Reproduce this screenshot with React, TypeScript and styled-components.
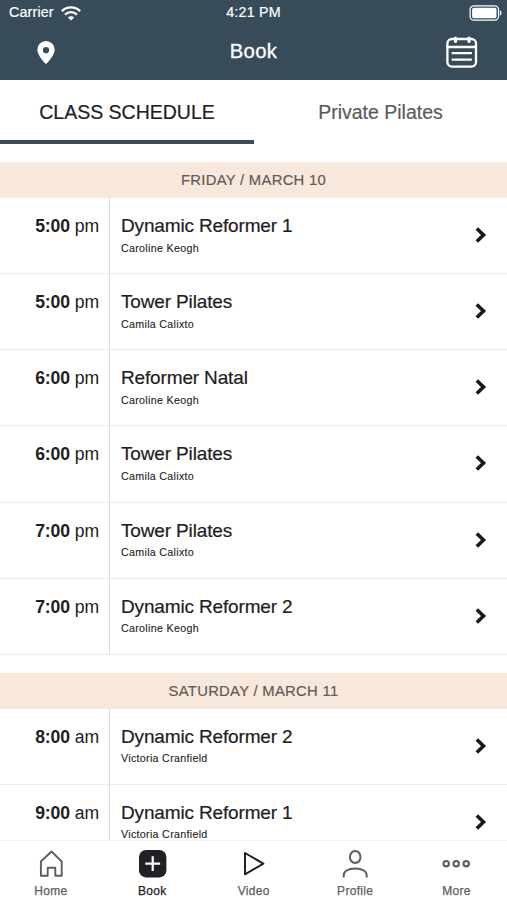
import React from 'react';
import styled, { createGlobalStyle } from 'styled-components';

const GlobalStyle = createGlobalStyle`
  * { box-sizing: border-box; }
  html, body { margin: 0; background: #fff; overflow: hidden; }
  body { font-family: "Liberation Sans", Arial, sans-serif; color: #1f2022; }
`;

const Screen = styled.div`
  width: 507px;
  height: 900px;
  display: flex;
  flex-direction: column;
  overflow: hidden;
  background: #fff;
`;

const Header = styled.header`
  flex: none;
  height: 80px;
  background: #384b59;
  color: #fff;
`;

const StatusBar = styled.div`
  height: 25px;
  display: grid;
  grid-template-columns: 1fr auto 1fr;
  align-items: center;
  padding: 0 5px 0 9px;
  font-size: 14.3px;
  line-height: 25px;
  -webkit-text-stroke: 0.2px #fff;
`;

const Carrier = styled.div`
  display: flex;
  align-items: center;
  gap: 7px;
  height: 25px;
  letter-spacing: 0.15px;
`;

const Clock = styled.span`
  letter-spacing: 0.2px;
  padding-right: 4px;
`;

const BatterySlot = styled.div`
  display: flex;
  justify-content: flex-end;
`;

const NavBar = styled.div`
  height: 55px;
  display: grid;
  grid-template-columns: 92px 1fr 92px;
  align-items: center;
`;

const NavAction = styled.div`
  display: flex;
  justify-content: center;
`;

const Title = styled.h1`
  margin: 0;
  padding-bottom: 2px;
  font-size: 20.3px;
  line-height: 53px;
  font-weight: 400;
  text-align: center;
  letter-spacing: 0.3px;
  -webkit-text-stroke: 0.3px #fff;
`;

const Tabs = styled.nav`
  flex: none;
  height: 82px;
  display: grid;
  grid-template-columns: 254px 1fr;
`;

const Tab = styled.div<{ $active?: boolean }>`
  height: 64px;
  line-height: 64px;
  text-align: center;
  font-size: 19.5px;
  -webkit-text-stroke: 0.2px currentColor;
  color: ${p => (p.$active ? '#202124' : '#5a5a5c')};
  border-bottom: 4px solid ${p => (p.$active ? '#384b59' : 'transparent')};
`;

const Schedule = styled.main`
  flex: 1;
  min-height: 0;
  overflow: hidden;
  display: flex;
  flex-direction: column;
  gap: 18px;
`;

const Day = styled.section`
  flex: none;
`;

const DayHeading = styled.h2`
  margin: 0;
  height: 36px;
  background: #f8e8dc;
  color: #625b57;
  text-align: center;
  font-weight: 400;
  font-size: 14.8px;
  line-height: 36px;
  letter-spacing: 0.3px;
  -webkit-text-stroke: 0.2px currentColor;
`;

const Row = styled.div`
  height: 76.15px;
  display: grid;
  grid-template-columns: 110px 1fr 54px;
  border-bottom: 1px solid #e9ecee;
`;

const Time = styled.div`
  border-right: 1px solid #dadde0;
  padding: 17px 10px 0 0;
  text-align: right;
  font-size: 17.6px;
  line-height: 22px;
  letter-spacing: -0.1px;
`;

const Details = styled.div`
  padding: 16px 0 0 11px;
`;

const ClassName = styled.div`
  font-size: 19px;
  line-height: 24px;
  letter-spacing: -0.15px;
  -webkit-text-stroke: 0.2px currentColor;
`;

const Teacher = styled.div`
  font-size: 10.7px;
  line-height: 14px;
  margin-top: 2.5px;
  letter-spacing: 0.3px;
  -webkit-text-stroke: 0.1px currentColor;
`;

const Arrow = styled.div`
  display: flex;
  align-items: center;
  justify-content: center;
  padding: 0 0 1px 1px;
`;

const TabBar = styled.footer`
  flex: none;
  height: 60px;
  display: grid;
  grid-template-columns: repeat(5, 1fr);
  border-top: 1px solid #f3f3f4;
  background: #fff;
`;

const TabItem = styled.div<{ $active?: boolean }>`
  display: flex;
  flex-direction: column;
  align-items: center;
  padding: 8px 0 0;
  color: ${p => (p.$active ? '#1f2022' : '#5c5e62')};
`;

const TabLabel = styled.span`
  font-size: 12px;
  line-height: 14px;
  margin-top: 5px;
  padding-left: 0.5px;
  letter-spacing: 0.3px;
  -webkit-text-stroke: 0.25px currentColor;
`;

const WifiIcon = () => (
  <svg width="20" height="16" viewBox="0 0 20 16" fill="none" stroke="#fff" strokeWidth="2.2">
    <path d="M.8 6.1a13.3 13.3 0 0 1 18.4 0" />
    <path d="M4 9.6a8.6 8.6 0 0 1 12 0" />
    <path d="M10 15.5 6.9 12.5a4.4 4.4 0 0 1 6.2 0Z" fill="#fff" stroke="none" />
  </svg>
);

const BatteryIcon = () => (
  <svg width="33" height="16" viewBox="0 0 33 16">
    <rect x="1.1" y=".8" width="28.4" height="14.4" rx="3.6" fill="none" stroke="#fff" strokeWidth="1.2" />
    <rect x="3.1" y="2.8" width="24.4" height="10.4" rx="1.8" fill="#fff" />
    <path d="M30.8 5.2q1.8.7 1.8 2.8t-1.8 2.8Z" fill="#fff" />
  </svg>
);

const PinIcon = () => (
  <svg width="18" height="23" viewBox="0 0 18 23">
    <path fill="#fff" fillRule="evenodd" d="M9 0a8.7 8.7 0 0 0-8.7 8.7C.3 14.8 9 23 9 23s8.7-8.2 8.7-14.3A8.7 8.7 0 0 0 9 0Zm0 6.1a3.1 3.1 0 1 1 0 6.2 3.1 3.1 0 0 1 0-6.2Z" />
  </svg>
);

const CalendarIcon = () => (
  <svg width="34" height="34" viewBox="-2 1 34 34" fill="none" stroke="#fff" strokeWidth="2.3" strokeLinecap="round">
    <rect x="1.4" y="4" width="28.6" height="27.6" rx="4.5" />
    <path d="M1.5 12h28.5M6.5 18.2h18.5M6.5 24.6h18.5" />
    <path d="M9.5 3v3.5M23 3v3.5" strokeWidth="3.2" />
  </svg>
);

const ChevronIcon = () => (
  <svg width="12" height="16" viewBox="0 0 12 16" fill="none" stroke="#17191b" strokeWidth="3.6">
    <path d="m1.8 1.5 6.7 6.5-6.7 6.5" />
  </svg>
);

const HomeIcon = () => (
  <svg width="30" height="30" viewBox="0 0 30 30" fill="none" stroke="currentColor" strokeWidth="1.9" strokeLinejoin="round">
    <path d="M4.9 12.5 15.5 2.5l10.2 10v14.3h-6.4v-8.1h-7.6v8.1H4.9Z" />
  </svg>
);

const BookIcon = () => (
  <svg width="30" height="30" viewBox="0 0 30 30">
    <rect x="2" y="1" width="27.4" height="27.4" rx="7" fill="#202124" />
    <path d="M15.7 7.3v14.8M8.3 14.7h14.8" stroke="#fff" strokeWidth="2.2" />
  </svg>
);

const VideoIcon = () => (
  <svg width="30" height="30" viewBox="0 0 30 30" fill="none" stroke="#202124" strokeWidth="2" strokeLinejoin="round">
    <path d="M7 4v21.3L25.4 14.7Z" />
  </svg>
);

const ProfileIcon = () => (
  <svg width="30" height="30" viewBox="0 0 30 30" fill="none" stroke="currentColor" strokeWidth="2">
    <ellipse cx="15.2" cy="8" rx="5.3" ry="6" />
    <path d="M3.7 28.5v-2.2c0-3.7 3.8-6.8 11.5-6.8s11.5 3.1 11.5 6.8v2.2" />
  </svg>
);

const MoreIcon = () => (
  <svg width="30" height="30" viewBox="0 0 30 30" fill="none" stroke="currentColor" strokeWidth="2.1">
    <circle cx="5.2" cy="14.7" r="2.7" />
    <circle cx="15.2" cy="14.7" r="2.7" />
    <circle cx="25.2" cy="14.7" r="2.7" />
  </svg>
);

const days = [
  {
    label: 'FRIDAY / MARCH 10',
    classes: [
      ['5:00', 'pm', 'Dynamic Reformer 1', 'Caroline Keogh'],
      ['5:00', 'pm', 'Tower Pilates', 'Camila Calixto'],
      ['6:00', 'pm', 'Reformer Natal', 'Caroline Keogh'],
      ['6:00', 'pm', 'Tower Pilates', 'Camila Calixto'],
      ['7:00', 'pm', 'Tower Pilates', 'Camila Calixto'],
      ['7:00', 'pm', 'Dynamic Reformer 2', 'Caroline Keogh'],
    ],
  },
  {
    label: 'SATURDAY / MARCH 11',
    classes: [
      ['8:00', 'am', 'Dynamic Reformer 2', 'Victoria Cranfield'],
      ['9:00', 'am', 'Dynamic Reformer 1', 'Victoria Cranfield'],
    ],
  },
];

const tabItems = [
  { label: 'Home', Icon: HomeIcon },
  { label: 'Book', Icon: BookIcon, active: true },
  { label: 'Video', Icon: VideoIcon },
  { label: 'Profile', Icon: ProfileIcon },
  { label: 'More', Icon: MoreIcon },
];

export default function App() {
  return (
    <Screen>
      <GlobalStyle />
      <Header>
        <StatusBar>
          <Carrier>Carrier <WifiIcon /></Carrier>
          <Clock>4:21 PM</Clock>
          <BatterySlot><BatteryIcon /></BatterySlot>
        </StatusBar>
        <NavBar>
          <NavAction><PinIcon /></NavAction>
          <Title>Book</Title>
          <NavAction><CalendarIcon /></NavAction>
        </NavBar>
      </Header>
      <Tabs>
        <Tab $active>CLASS SCHEDULE</Tab>
        <Tab>Private Pilates</Tab>
      </Tabs>
      <Schedule>
        {days.map(day => (
          <Day key={day.label}>
            <DayHeading>{day.label}</DayHeading>
            {day.classes.map(([time, half, name, teacher], i) => (
              <Row key={i}>
                <Time><b>{time}</b> {half}</Time>
                <Details>
                  <ClassName>{name}</ClassName>
                  <Teacher>{teacher}</Teacher>
                </Details>
                <Arrow><ChevronIcon /></Arrow>
              </Row>
            ))}
          </Day>
        ))}
      </Schedule>
      <TabBar>
        {tabItems.map(({ label, Icon, active }) => (
          <TabItem key={label} $active={active}>
            <Icon />
            <TabLabel>{label}</TabLabel>
          </TabItem>
        ))}
      </TabBar>
    </Screen>
  );
}
